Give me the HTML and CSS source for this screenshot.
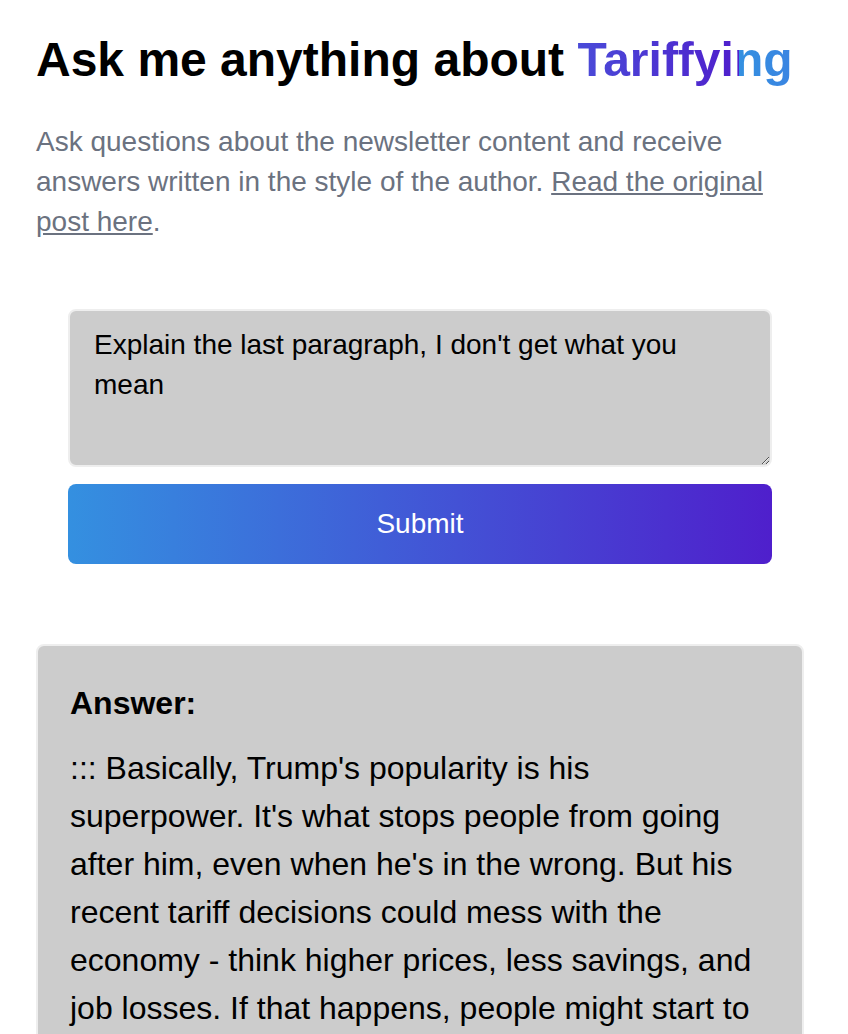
FILE: index.html
```html
<!DOCTYPE html>
<html lang="en">
<head>
    <meta charset="UTF-8">
    <meta name="viewport" content="width=device-width, initial-scale=1.0">
    <title>Ask me anything about Tariffying</title>
    <link rel="stylesheet" href="styles.css">
</head>
<body>

<div class="page">
    <h1>Ask me anything about <span class="brand">Tariffying</span></h1>

    <p class="intro">Ask questions about the newsletter content and receive answers written in the style of the author. <a href="#">Read the original post here</a>.</p>

    <!-- Pergunta -->
    <form class="ask" onsubmit="return false">
        <textarea rows="3">Explain the last paragraph, I don't get what you mean</textarea>
        <button type="submit">Submit</button>
    </form>

    <!-- Resposta -->
    <div class="answer">
        <h3>Answer:</h3>
        <p>::: Basically, Trump's popularity is his superpower. It's what stops people from going after him, even when he's in the wrong. But his recent tariff decisions could mess with the economy - think higher prices, less savings, and job losses. If that happens, people might start to turn on him, and his superpower could fade.</p>
    </div>
</div>

</body>
</html>
```

FILE: styles.css
```css
body {
    margin: 0;
    font-family: "Liberation Sans", Arial, sans-serif;
    color: #000;
    background: #fff;
}

.page {
    width: 768px;
    margin-left: 36px;
    padding-top: 28px;
}

h1 {
    font-size: 48px;
    font-weight: bold;
    margin: 0;
    line-height: 64px;
}

.brand {
    background: linear-gradient(to right, #4a4bd8 0%, #4f1fcc 75%, #3490e0 75%, #3a84e2 100%);
    -webkit-background-clip: text;
    background-clip: text;
    color: transparent;
}

.intro {
    font-size: 28px;
    line-height: 40px;
    color: #6b7280;
    margin: 30px 0 0 0;
    width: 740px;
}

.intro a {
    color: #6b7280;
}

.ask {
    margin: 67px 32px 0 32px;
    display: flex;
    flex-direction: column;
    gap: 17px;
}

.ask textarea {
    box-sizing: border-box;
    height: 158px;
    width: 100%;
    background: #cccccc;
    border: 2px solid #eeeeee;
    border-radius: 8px;
    padding: 14px 24px;
    font-family: "Liberation Sans", Arial, sans-serif;
    font-size: 28px;
    line-height: 40px;
    color: #000;
    resize: vertical;
}

.ask button {
    height: 80px;
    border: none;
    border-radius: 8px;
    background: linear-gradient(to right, #3490e0, #4f1fcc);
    color: #fff;
    font-family: "Liberation Sans", Arial, sans-serif;
    font-size: 28px;
    cursor: pointer;
}

.answer {
    margin-top: 80px;
    background: #cccccc;
    border: 2px solid #eeeeee;
    border-radius: 8px;
    padding: 29px 32px 32px 32px;
}

.answer h3 {
    font-size: 32px;
    margin: 0;
    line-height: 56px;
}

.answer p {
    font-size: 32px;
    line-height: 48px;
    margin: 13px 0 0 0;
    max-width: 682px;
}
```
